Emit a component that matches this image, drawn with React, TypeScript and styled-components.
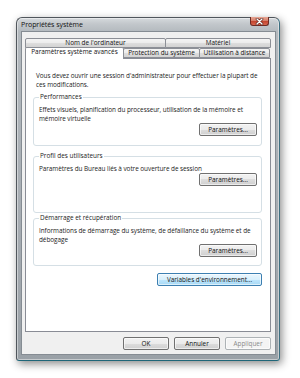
import React from "react";
import styled, { createGlobalStyle } from "styled-components";

const GlobalStyle = createGlobalStyle`
  html, body { margin: 0; padding: 0; background: #ffffff; }
  body { font-family: "Open Sans", "Noto Sans", sans-serif; color: #1b1b1b; }
  * { box-sizing: border-box; }
`;

const Stage = styled.div`
  width: 300px;
  height: 378px;
  padding: 17px 20px 0 16px;
`;

const Window = styled.div`
  width: 264px;
  height: 344px;
  display: flex;
  flex-direction: column;
  border: 1px solid #50565c;
  border-right-color: #3d6f80;
  border-bottom-color: #1f6678;
  border-radius: 6px 6px 3px 3px;
  background: linear-gradient(#d6dadd 0px, #c2c7cb 6px, #b3b9be 14px, #a6acb2 60%, #9aa1a7 100%);
  box-shadow: 2px 3px 8px rgba(0, 0, 0, 0.45), inset 0 0 0 1px rgba(255, 255, 255, 0.45);
  padding: 0 3px 5px 4px;
`;

const TitleBar = styled.div`
  height: 13px;
  display: flex;
  align-items: flex-start;
  justify-content: space-between;
`;

const Title = styled.span`
  font-size: 7px;
  line-height: 13px;
  letter-spacing: -0.05px;
  color: #111;
  align-self: center;
`;

const CloseButton = styled.div`
  width: 19px;
  height: 9px;
  margin: -1px 7px 0 0;
  border: 1px solid #6b2a22;
  border-top: none;
  border-radius: 0 0 3px 3px;
  background: linear-gradient(#e7a795 0%, #d7806b 45%, #c3452f 55%, #d9664e 100%);
  display: flex;
  align-items: center;
  justify-content: center;
`;

const Client = styled.div`
  flex: 1;
  display: flex;
  flex-direction: column;
  background: #f0f0f0;
  border: 1px solid #858c93;
  padding: 6px 4px 4px 3px;
`;

const TabRow = styled.div<{ $front?: boolean }>`
  display: flex;
  height: 10px;
  padding-right: 1px;
  position: relative;
  z-index: ${(p) => (p.$front ? 2 : 1)};
`;

const Tab = styled.div<{ $w: number; $selected?: boolean }>`
  width: ${(p) => p.$w}px;
  flex: none;
  margin-left: -1px;
  &:first-child { margin-left: 0; }
  border: 1px solid #8c8f96;
  border-bottom: ${(p) => (p.$selected ? "none" : "1px solid #8c8f96")};
  border-radius: 2px 2px 0 0;
  background: ${(p) =>
    p.$selected ? "#ffffff" : "linear-gradient(#f4f4f4, #ececec 50%, #dedede 50%, #d3d3d3)"};
  height: ${(p) => (p.$selected ? "12px" : "10px")};
  margin-top: ${(p) => (p.$selected ? "-1px" : "0")};
  position: relative;
  z-index: ${(p) => (p.$selected ? 3 : 1)};
  font-size: 6.4px;
  line-height: 8px;
  text-align: center;
  white-space: nowrap;
  overflow: hidden;
  color: #111;
`;

const Panel = styled.div`
  height: 274px;
  background: #ffffff;
  border: 1px solid #898c95;
  display: flex;
  flex-direction: column;
  padding: 12px 8px 0 7px;
`;

const Text = styled.p`
  margin: 0;
  font-size: 6.4px;
  line-height: 9px;
  letter-spacing: -0.05px;
  color: #1b1b1b;
`;

const Intro = styled(Text)`
  padding: 0 4px 0 3px;
`;

const Group = styled.fieldset<{ $h: number; $mt: number; $pb: number }>`
  margin: ${(p) => p.$mt}px 0 0 0;
  height: ${(p) => p.$h}px;
  min-width: 0;
  border: 1px solid #d5dfe5;
  border-radius: 3px;
  padding: 4px 4px ${(p) => p.$pb}px 5px;
  display: flex;
  flex-direction: column;
`;

const Legend = styled.legend`
  font-size: 6.4px;
  line-height: 8px;
  padding: 0 1px;
  margin-left: 0;
  color: #1b1b1b;
`;

const Button = styled.div<{ $w: number; $variant?: "hot" | "disabled" }>`
  width: ${(p) => p.$w}px;
  height: 13px;
  flex: none;
  border: 1px solid
    ${(p) => (p.$variant === "hot" ? "#3c7fb1" : p.$variant === "disabled" ? "#adb2b5" : "#707070")};
  border-radius: 2px;
  background: ${(p) =>
    p.$variant === "hot"
      ? "linear-gradient(#eaf6fd, #d9f0fc 50%, #bee6fd 50%, #a7d9f5)"
      : p.$variant === "disabled"
      ? "#f4f4f4"
      : "linear-gradient(#f2f2f2, #ebebeb 50%, #dddddd 50%, #cfcfcf)"};
  box-shadow: inset 0 0 0 1px rgba(255, 255, 255, 0.6);
  font-size: 6.4px;
  line-height: 11px;
  text-align: center;
  white-space: nowrap;
  color: ${(p) => (p.$variant === "disabled" ? "#8a8a8a" : "#111")};
`;

const RightButton = styled(Button)`
  align-self: flex-end;
  margin-top: auto;
`;

const EnvButton = styled(Button)`
  align-self: flex-end;
  margin-top: 7px;
`;

const Footer = styled.div`
  display: flex;
  justify-content: flex-end;
  gap: 5px;
  margin-top: 5px;
`;

export default function App() {
  return (
    <>
      <GlobalStyle />
      <Stage>
        <Window>
          <TitleBar>
            <Title>Propriétés système</Title>
            <CloseButton>
              <svg width="9" height="7" viewBox="0 0 9 7">
                <path d="M2 1 L7 6 M7 1 L2 6" stroke="#5a1f17" strokeWidth="2.6" strokeLinecap="round" />
                <path d="M2 1 L7 6 M7 1 L2 6" stroke="#ffffff" strokeWidth="1.4" strokeLinecap="round" />
              </svg>
            </CloseButton>
          </TitleBar>
          <Client>
            <TabRow>
              <Tab $w={141}>Nom de l'ordinateur</Tab>
              <Tab $w={106}>Matériel</Tab>
            </TabRow>
            <TabRow $front>
              <Tab $w={99} $selected>Paramètres système avancés</Tab>
              <Tab $w={77}>Protection du système</Tab>
              <Tab $w={71}>Utilisation à distance</Tab>
            </TabRow>
            <Panel>
              <Intro>
                Vous devez ouvrir une session d'administrateur pour effectuer la plupart de ces modifications.
              </Intro>
              <Group $h={53} $mt={4} $pb={5}>
                <Legend>Performances</Legend>
                <Text>
                  Effets visuels, planification du processeur, utilisation de la mémoire et mémoire virtuelle
                </Text>
                <RightButton $w={58}>Paramètres...</RightButton>
              </Group>
              <Group $h={61} $mt={6} $pb={3}>
                <Legend>Profil des utilisateurs</Legend>
                <Text>Paramètres du Bureau liés à votre ouverture de session</Text>
                <RightButton $w={58}>Paramètres...</RightButton>
              </Group>
              <Group $h={52} $mt={1} $pb={5}>
                <Legend>Démarrage et récupération</Legend>
                <Text>
                  Informations de démarrage du système, de défaillance du système et de débogage
                </Text>
                <RightButton $w={58}>Paramètres...</RightButton>
              </Group>
              <EnvButton $w={105} $variant="hot">
                Variables d'environnement...
              </EnvButton>
            </Panel>
            <Footer>
              <Button $w={46}>OK</Button>
              <Button $w={46}>Annuler</Button>
              <Button $w={46} $variant="disabled">
                Appliquer
              </Button>
            </Footer>
          </Client>
        </Window>
      </Stage>
    </>
  );
}
